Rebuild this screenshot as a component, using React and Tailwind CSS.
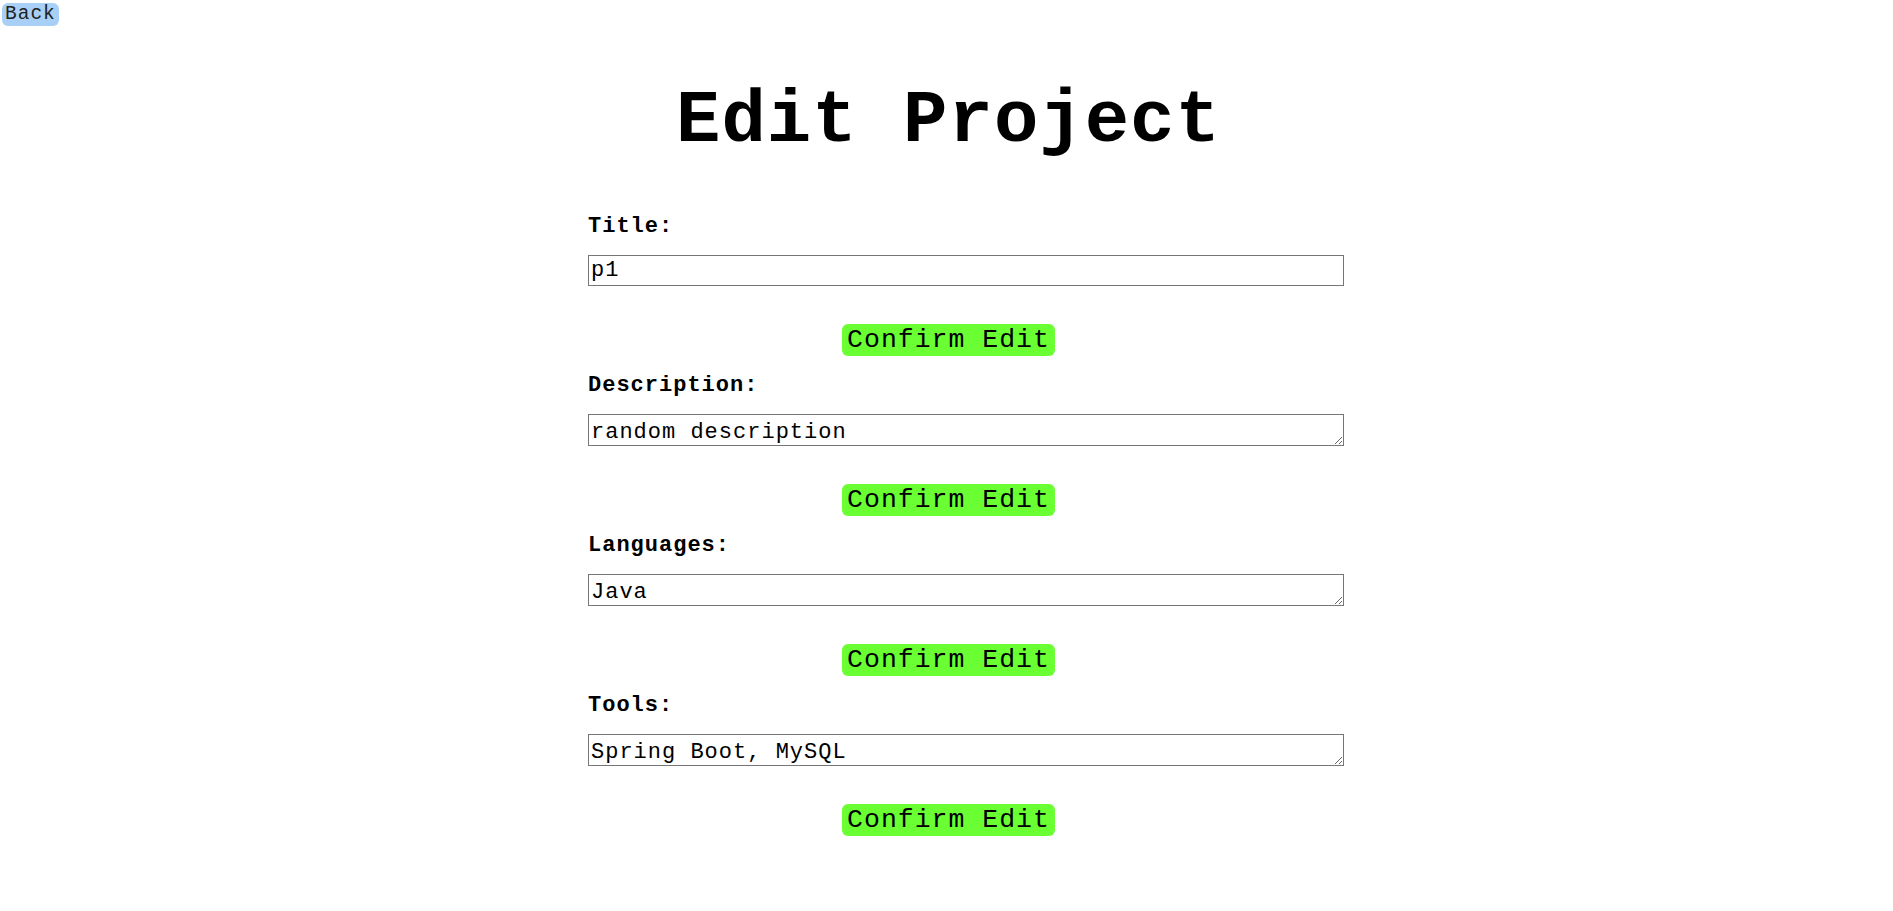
import React, { useState } from "react";

const fields = [
  { key: "title", label: "Title:", value: "p1", multiline: false },
  { key: "description", label: "Description:", value: "random description", multiline: true },
  { key: "languages", label: "Languages:", value: "Java", multiline: true },
  { key: "tools", label: "Tools:", value: "Spring Boot, MySQL", multiline: true },
];

const EditField = ({ field, value, onChange, first }) => {
  const boxClass =
    "block w-[756px] ml-[18px] mt-[15px] border border-[#767676] bg-white px-[2px] text-black text-[22px] tracking-[1px] outline-none";

  return (
    <div>
      <label
        htmlFor={field.key}
        className={`block ml-[18px] text-[22px] leading-[27px] tracking-[1px] font-bold text-black ${
          first ? "mt-[49px]" : "mt-[15.5px]"
        }`}
      >
        {field.label}
      </label>
      {field.multiline ? (
        <textarea
          id={field.key}
          rows={1}
          value={value}
          onChange={(e) => onChange(field.key, e.target.value)}
          className={`${boxClass} h-[32px] pt-[1px] leading-normal overflow-hidden`}
        />
      ) : (
        <input
          id={field.key}
          type="text"
          value={value}
          onChange={(e) => onChange(field.key, e.target.value)}
          className={`${boxClass} h-[31px] leading-normal`}
        />
      )}
      <div className="flex justify-center mt-[38px]">
        <button
          type="button"
          className="h-[32.5px] px-[5px] rounded-md bg-[#6aff33] text-[26.5px] leading-[32px] tracking-[1px] text-black"
        >
          Confirm Edit
        </button>
      </div>
    </div>
  );
};

const App = () => {
  const [values, setValues] = useState(
    Object.fromEntries(fields.map((f) => [f.key, f.value]))
  );

  const handleChange = (key, val) => {
    setValues({ ...values, [key]: val });
  };

  return (
    <div className="min-h-screen bg-white font-['Liberation_Mono','Courier_New',monospace] text-black">
      <div className="flex">
        <button
          type="button"
          className="mt-[3px] ml-[2px] h-[23px] px-[3px] rounded-md bg-[#a8d0f6] text-[19.5px] leading-[23px] tracking-[1px] text-[#222]"
        >
          Back
        </button>
      </div>

      <div className="pl-[4px]">
        <h1 className="mt-[51.5px] text-center text-[74px] leading-[86px] tracking-[1px] font-bold">
          Edit Project
        </h1>

        <div className="w-[757px] mx-auto pb-10">
          {fields.map((field, i) => (
            <EditField
              key={field.key}
              field={field}
              value={values[field.key]}
              onChange={handleChange}
              first={i === 0}
            />
          ))}
        </div>
      </div>
    </div>
  );
};

export default App;
